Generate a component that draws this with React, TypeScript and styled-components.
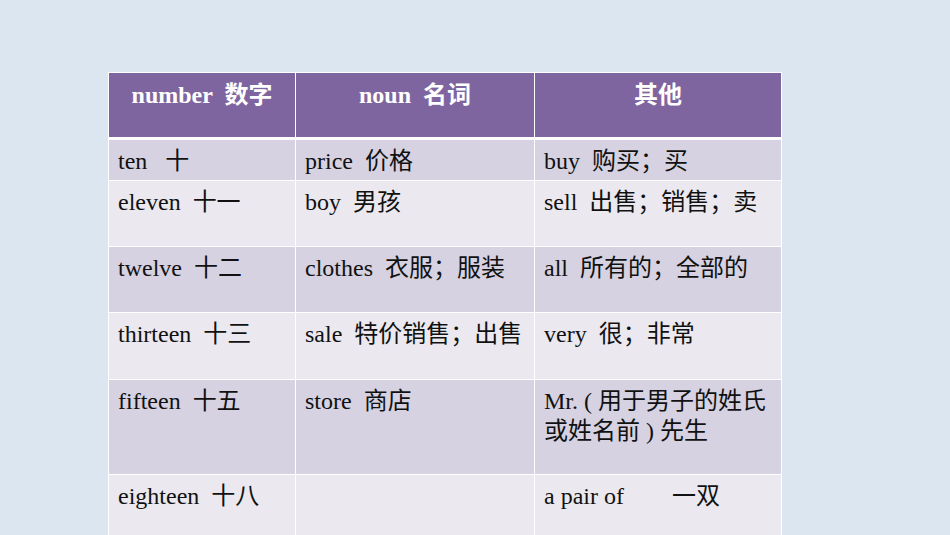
import React from 'react'
import styled, { createGlobalStyle } from 'styled-components'

const GlobalStyle = createGlobalStyle`
  html, body {
    margin: 0;
    padding: 0;
    background: #dce6f1;
  }
`

type RowData = {
  cells: string[]
  height: number
}

const rows: RowData[] = [
  { cells: ['ten   十', 'price  价格', 'buy  购买；买'], height: 40 },
  { cells: ['eleven  十一', 'boy  男孩', 'sell  出售；销售；卖'], height: 65 },
  { cells: ['twelve  十二', 'clothes  衣服；服装', 'all  所有的；全部的'], height: 65 },
  { cells: ['thirteen  十三', 'sale  特价销售；出售', 'very  很；非常'], height: 66 },
  { cells: ['fifteen  十五', 'store  商店', 'Mr. ( 用于男子的姓氏或姓名前 ) 先生'], height: 94 },
  { cells: ['eighteen  十八', '', 'a pair of        一双'], height: 70 },
]

const headers = ['number  数字', 'noun  名词', '其他']

const App = () => {
  return (
    <Page>
      <GlobalStyle />
      <Table>
        <HeaderRow>
          {headers.map((h) => (
            <HeadCell key={h}>{h}</HeadCell>
          ))}
        </HeaderRow>
        {rows.map((r, i) => (
          <BodyRow key={i} $height={r.height}>
            {r.cells.map((c, j) => (
              <Cell key={j} $odd={i % 2 === 0}>
                {c}
              </Cell>
            ))}
          </BodyRow>
        ))}
      </Table>
    </Page>
  )
}

export default App

const Page = styled.div`
  width: 950px;
  height: 535px;
  overflow: hidden;
  padding: 72px 0 0 108px;
  box-sizing: border-box;
  font-family: 'Liberation Serif', 'Noto Sans CJK SC', serif;
`

const Table = styled.div`
  display: flex;
  flex-direction: column;
  gap: 1px;
  width: 674px;
  box-sizing: border-box;
  padding: 1px;
  background: #ffffff;
`

const GridRow = styled.div`
  display: grid;
  grid-template-columns: 186px 238px 246px;
  gap: 1px;
`

const HeaderRow = styled(GridRow)`
  height: 64px;
  padding-bottom: 2px;
`

const BodyRow = styled(GridRow)<{ $height: number }>`
  height: ${({ $height }) => $height}px;
`

const HeadCell = styled.div`
  background: #7f65a0;
  color: #ffffff;
  font-size: 24px;
  font-weight: bold;
  line-height: 30px;
  text-align: center;
  padding: 7px 10px 0;
  white-space: pre;
`

const Cell = styled.div<{ $odd: boolean }>`
  background: ${({ $odd }) => ($odd ? '#d6d2e1' : '#ebe9ef')};
  color: #111111;
  font-size: 24px;
  line-height: 30px;
  padding: 6px 8px 0 9px;
  white-space: pre-wrap;
  overflow: hidden;
`
